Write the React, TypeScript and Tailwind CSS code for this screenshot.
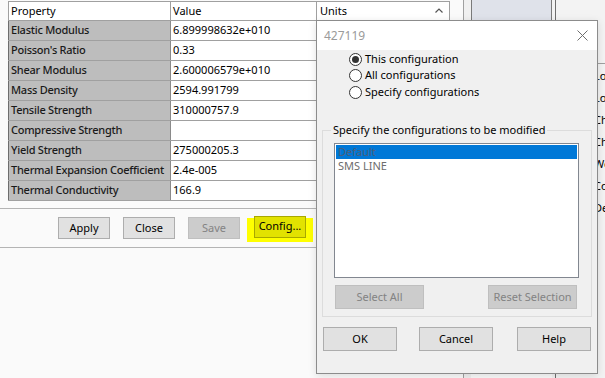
const rows: [string, string][] = [
  ["Elastic Modulus", "6.899998632e+010"],
  ["Poisson's Ratio", "0.33"],
  ["Shear Modulus", "2.600006579e+010"],
  ["Mass Density", "2594.991799"],
  ["Tensile Strength", "310000757.9"],
  ["Compressive Strength", ""],
  ["Yield Strength", "275000205.3"],
  ["Thermal Expansion Coefficient", "2.4e-005"],
  ["Thermal Conductivity", "166.9"],
];

const sideItems = ["Lo", "Lo", "Ch", "Ch", "We", "Co", "De"];

function Radio({ label, checked }: { label: string; checked?: boolean }) {
  return (
    <div className="flex h-[16px] items-center">
      <span className="flex h-[13px] w-[13px] items-center justify-center rounded-full border border-[#333333] bg-white">
        {checked && <span className="h-[7px] w-[7px] rounded-full bg-[#333333]" />}
      </span>
      <span className="ml-[3px] text-black">{label}</span>
    </div>
  );
}

function WinButton({
  label,
  className,
  disabled,
}: {
  label: string;
  className: string;
  disabled?: boolean;
}) {
  return (
    <button
      type="button"
      className={
        disabled
          ? `flex items-center justify-center border border-[#bfbfbf] bg-[#cccccc] text-[#838383] ${className}`
          : `flex items-center justify-center border border-[#adadad] bg-[#e1e1e1] text-black ${className}`
      }
    >
      {label}
    </button>
  );
}

function PropertyTable() {
  return (
    <div className="ml-[8px] mt-[1px] w-[442px]">
      <div className="flex h-[20px] border-y border-[#a0a0a0] bg-white">
        <div className="flex w-[163px] items-center border-x border-[#a0a0a0] pl-[2px]">Property</div>
        <div className="flex w-[146px] items-center border-r border-[#a0a0a0] pl-[2px]">Value</div>
        <div className="flex w-[133px] items-center justify-between border-r border-[#a0a0a0] pl-[3px] pr-[6px]">
          Units
          <svg width="8" height="5" viewBox="0 0 8 5" className="mb-[2px]">
            <path d="M0.5 4.5 L4 1 L7.5 4.5" fill="none" stroke="#555" strokeWidth="1.2" />
          </svg>
        </div>
      </div>
      {rows.map(([name, value]) => (
        <div key={name} className="flex h-[20px] border-b border-[#a0a0a0]">
          <div className="flex w-[163px] items-center overflow-hidden whitespace-nowrap border-x border-l-[#6d6d6d] border-r-[#8a8a8a] bg-[#bdbdbd] pl-[2px] font-medium tracking-[-0.25px] text-[#1a1a1a]">
            {name}
          </div>
          <div className="flex w-[146px] items-center border-r border-[#a0a0a0] bg-white pl-[2px]">{value}</div>
          <div className="w-[133px] border-r border-[#a0a0a0] bg-white" />
        </div>
      ))}
    </div>
  );
}

function ConfigDialog() {
  return (
    <div className="absolute left-[316px] top-[20px] flex h-[354px] w-[282px] flex-col border border-[#8c8c8c] bg-[#f0f0f0] shadow-[0_2px_8px_rgba(0,0,0,0.12)]">
      <div className="flex h-[29px] items-center justify-between bg-white pl-[7px] pr-[9px]">
        <span className="text-[12px] text-[#9a9a9a]">427119</span>
        <svg width="11" height="11" viewBox="0 0 11 11">
          <path d="M0.5 0.5 L10.5 10.5 M10.5 0.5 L0.5 10.5" stroke="#6e6e6e" strokeWidth="1" />
        </svg>
      </div>

      <div className="flex flex-col pl-[32px] pt-[1px]">
        <Radio label="This configuration" checked />
        <Radio label="All configurations" />
        <div className="mt-[1px]">
          <Radio label="Specify configurations" />
        </div>
      </div>

      <div className="relative ml-[5px] mt-[30px] w-[270px] border border-[#dcdcdc] pb-[7px] pl-[11px] pt-[12px]">
        <span className="absolute left-[8px] top-[-9px] bg-[#f0f0f0] px-[2px] leading-[16px] text-black">
          Specify the configurations to be modified
        </span>
        <div className="h-[135px] w-[245px] border border-[#828790] bg-white p-[1px]">
          <div className="flex h-[14px] items-center bg-[#0078d7] pl-[2px] text-[#4a5f7a]">Default</div>
          <div className="flex h-[14px] items-center pl-[2px] text-[#6d6d6d]">SMS LINE</div>
        </div>
        <div className="mt-[7px] flex w-[243px] justify-between pl-[1px]">
          <WinButton label="Select All" disabled className="h-[24px] w-[89px]" />
          <WinButton label="Reset Selection" disabled className="h-[24px] w-[89px]" />
        </div>
      </div>

      <div className="ml-[6px] mt-[10px] flex">
        <WinButton label="OK" className="h-[24px] w-[74px]" />
        <WinButton label="Cancel" className="ml-[22px] h-[24px] w-[74px]" />
        <WinButton label="Help" className="ml-[24px] h-[24px] w-[74px]" />
      </div>
    </div>
  );
}

export default function App() {
  return (
    <div className="relative flex h-[378px] w-[605px] overflow-hidden bg-[#fafafa] font-['Noto_Sans','Segoe_UI',sans-serif] text-[11px] text-black">
      <div className="flex w-[464px] flex-none flex-col border-r border-[#a0a0a0]">
        <PropertyTable />
        <div className="mt-[7px] border-b border-[#b4b4b4]" />
        <div className="flex h-[38px] items-center pl-[58px]">
          <WinButton label="Apply" className="h-[22px] w-[52px]" />
          <WinButton label="Close" className="ml-[13px] h-[22px] w-[52px]" />
          <WinButton label="Save" disabled className="ml-[13px] h-[22px] w-[52px]" />
          <div className="ml-[7px] mt-[3px] flex h-[24px] w-[66px] items-start bg-[#ffff00] pl-[7px]">
            <button
              type="button"
              className="-mt-[2px] flex h-[22px] w-[52px] items-center justify-center border border-[#a8a800] bg-[#e2e200] text-black"
            >
              Config...
            </button>
          </div>
        </div>
        <div className="border-b border-[#b4b4b4]" />
      </div>

      <div className="w-[7px] flex-none bg-[#f0f0f0]" />
      <div className="h-[200px] w-[81px] flex-none border-x border-[#7a7a7a] bg-[#dfe2ea]" />
      <div className="w-[3px] flex-none bg-[#f3f3f3]" />
      <div className="flex flex-1 flex-col border-l border-[#6e6e6e] bg-[#f3f3f3]">
        <div className="h-[64px] border-b border-[#a0a0a0]" />
        <div className="flex flex-col pl-[38px] pt-[1px]">
          {sideItems.map((item, i) => (
            <div key={i} className="flex h-[22px] items-center whitespace-nowrap">
              {item}
            </div>
          ))}
        </div>
      </div>

      <ConfigDialog />
    </div>
  );
}
